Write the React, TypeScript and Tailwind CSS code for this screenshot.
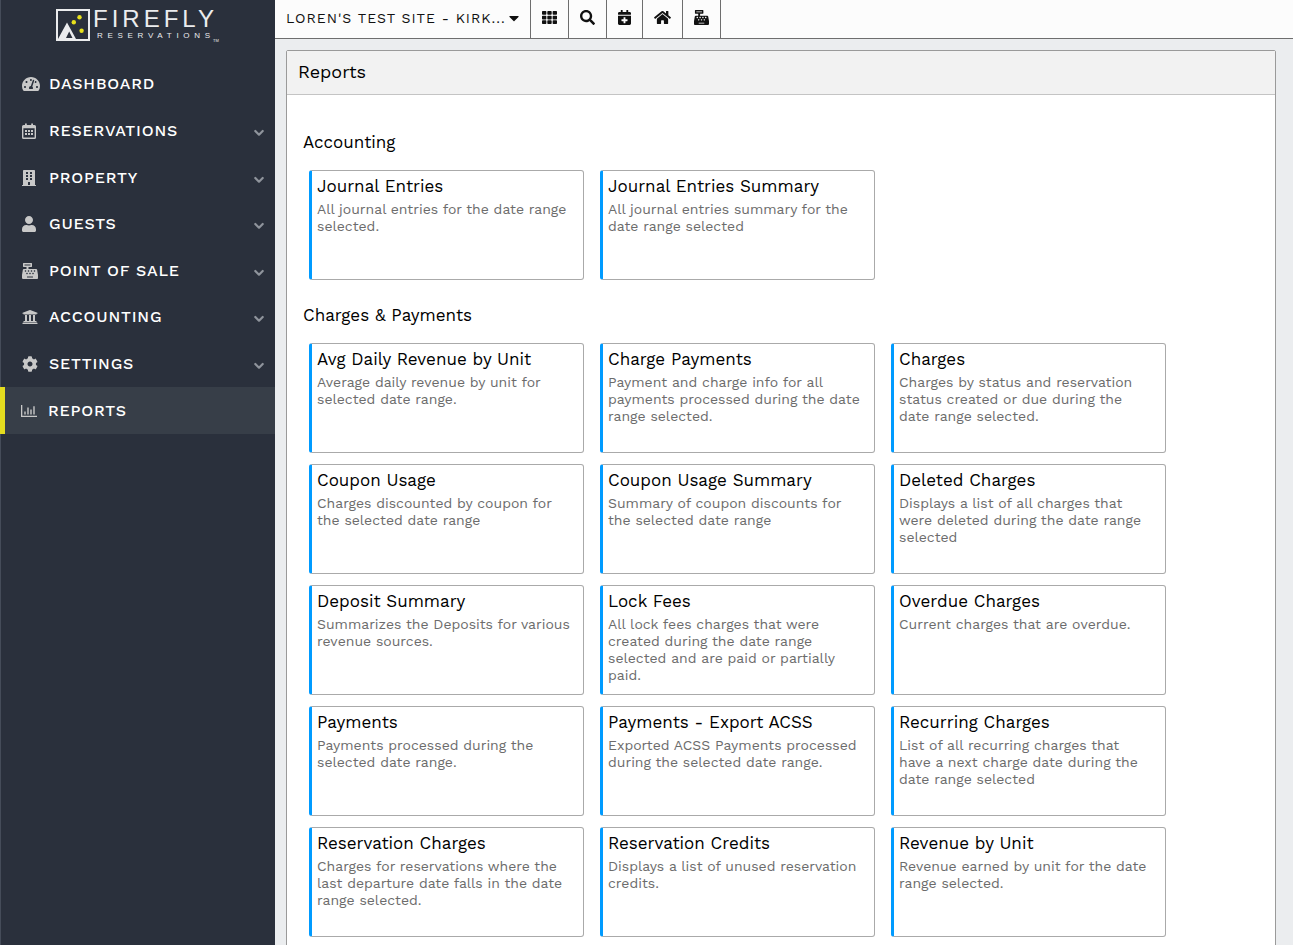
import React, { useState } from "react";
import {
  FaBuilding,
  FaCalendarPlus,
  FaCaretDown,
  FaCashRegister,
  FaCog,
  FaHome,
  FaSearch,
  FaTachometerAlt,
  FaTh,
  FaUniversity,
  FaUser,
} from "react-icons/fa";

type Report = { title: string; text: string };
type Section = { name: string; reports: Report[] };
type IconProps = { className?: string };

const CalendarIcon = ({ className }: IconProps) => (
  <svg className={className} viewBox="0 0 14 16" fill="currentColor">
    <path
      fillRule="evenodd"
      d="M3 .4h1.8V2h4.4V.4H11V2h1.5A1.5 1.5 0 0 1 14 3.5v11a1.5 1.5 0 0 1-1.5 1.5h-11A1.5 1.5 0 0 1 0 14.5v-11A1.5 1.5 0 0 1 1.5 2H3zM1.4 5.2v9.200h11.200V5.200z"
    />
    <path d="M3 7h2v2H3zM6 7h2v2H6zM9 7h2v2H9zM3 10h2v2H3zM6 10h2v2H6zM9 10h2v2H9z" />
  </svg>
);

const ChartIcon = ({ className }: IconProps) => (
  <svg className={className} viewBox="0 0 16 16" fill="currentColor">
    <path d="M0 2h1.3v10.7H16V14H0z" />
    <path d="M3.3 8.5h1.4v3H3.300zM6.300 4.500h1.400v7H6.300zM9.300 6.500h1.400v5H9.300zM12.300 3.300h1.400v8.200h-1.400z" />
  </svg>
);

const ChevronIcon = ({ className }: IconProps) => (
  <svg className={className} viewBox="0 0 10 8" fill="none" stroke="currentColor">
    <path d="M1.3 2 5 5.7 8.7 2" strokeWidth="2.2" strokeLinecap="round" strokeLinejoin="round" />
  </svg>
);

const menu = [
  { label: "DASHBOARD", icon: FaTachometerAlt, size: "h-4 w-[18px]" },
  { label: "RESERVATIONS", icon: CalendarIcon, size: "h-4 w-[14px]", sub: true },
  { label: "PROPERTY", icon: FaBuilding, size: "h-4 w-[14px]", sub: true },
  { label: "GUESTS", icon: FaUser, size: "h-4 w-[14px]", sub: true },
  { label: "POINT OF SALE", icon: FaCashRegister, size: "size-4", sub: true },
  { label: "ACCOUNTING", icon: FaUniversity, size: "size-4", sub: true },
  { label: "SETTINGS", icon: FaCog, size: "size-4", sub: true },
  { label: "REPORTS", icon: ChartIcon, size: "size-4" },
];

const tools = [
  { label: "Grid", icon: FaTh, size: "size-[15px]" },
  { label: "Search", icon: FaSearch, size: "size-[15px]" },
  { label: "New reservation", icon: FaCalendarPlus, size: "h-[15px] w-[13px]" },
  { label: "Home", icon: FaHome, size: "h-[15px] w-[17px]" },
  { label: "Register", icon: FaCashRegister, size: "size-[15px]" },
];

const sections: Section[] = [
  {
    name: "Accounting",
    reports: [
      { title: "Journal Entries", text: "All journal entries for the date range selected." },
      { title: "Journal Entries Summary", text: "All journal entries summary for the date range selected" },
    ],
  },
  {
    name: "Charges & Payments",
    reports: [
      { title: "Avg Daily Revenue by Unit", text: "Average daily revenue by unit for selected date range." },
      { title: "Charge Payments", text: "Payment and charge info for all payments processed during the date range selected." },
      { title: "Charges", text: "Charges by status and reservation status created or due during the date range selected." },
      { title: "Coupon Usage", text: "Charges discounted by coupon for the selected date range" },
      { title: "Coupon Usage Summary", text: "Summary of coupon discounts for the selected date range" },
      { title: "Deleted Charges", text: "Displays a list of all charges that were deleted during the date range selected" },
      { title: "Deposit Summary", text: "Summarizes the Deposits for various revenue sources." },
      { title: "Lock Fees", text: "All lock fees charges that were created during the date range selected and are paid or partially paid." },
      { title: "Overdue Charges", text: "Current charges that are overdue." },
      { title: "Payments", text: "Payments processed during the selected date range." },
      { title: "Payments - Export ACSS", text: "Exported ACSS Payments processed during the selected date range." },
      { title: "Recurring Charges", text: "List of all recurring charges that have a next charge date during the date range selected" },
      { title: "Reservation Charges", text: "Charges for reservations where the last departure date falls in the date range selected." },
      { title: "Reservation Credits", text: "Displays a list of unused reservation credits." },
      { title: "Revenue by Unit", text: "Revenue earned by unit for the date range selected." },
    ],
  },
];

const Logo = () => (
  <svg className="h-[40px] w-[166px]" viewBox="0 0 166 40" fill="#ebecee">
    <rect x="2" y="6" width="32" height="30" fill="none" stroke="#ebecee" strokeWidth="2" />
    <path fillRule="evenodd" d="M3 35 12 18.5 21 35zM11 34h6.5l-3.300-6.500z" />
    <circle cx="24.5" cy="13.3" r="2.2" fill="#e8e11c" />
    <circle cx="18.8" cy="18.3" r="2.2" fill="#e8e11c" />
    <circle cx="26.6" cy="26.7" r="2.2" fill="#e8e11c" />
    <g fontFamily="'Liberation Sans', Arial, sans-serif">
      <text x="38" y="23" fontSize="24" letterSpacing="4">
        FIREFLY
      </text>
      <text x="42" y="34" fontSize="8" letterSpacing="4.7">
        RESERVATIONS
      </text>
      <text x="158" y="38" fontSize="4">
        TM
      </text>
    </g>
  </svg>
);

const SideBar = () => {
  const [active, setActive] = useState("REPORTS");

  return (
    <aside className="w-[275px] shrink-0 border-l border-[#454c59] bg-[#2a303c]">
      <a href="#" aria-label="Firefly Reservations" className="flex h-[61px] items-start pt-1 pl-[54px]">
        <Logo />
      </a>
      <nav className="-ml-px grid h-[373px] grid-rows-8">
        {menu.map(({ label, icon: Icon, size, sub }) => (
          <a
            key={label}
            href="#"
            onClick={() => setActive(label)}
            className={
              active === label
                ? "flex items-center border-l-5 border-[#e4dc1f] bg-[#373e48] pr-[11px] pl-4 text-white"
                : "flex items-center pr-[11px] pl-[22px] text-white"
            }
          >
            <span className="w-[27px] shrink-0 text-[#c8c8c8]">
              <Icon className={size} />
            </span>
            <span className="flex-1 text-[16px] font-medium tracking-wider">{label}</span>
            {sub && <ChevronIcon className="mt-1 h-2 w-[10px] text-[#8f949c]" />}
          </a>
        ))}
      </nav>
    </aside>
  );
};

const TopBar = () => (
  <header className="flex h-[39px] border-b border-[#6e6e6e] bg-[#fcfcfc] text-[#111]">
    <div className="relative w-[256px] border-r border-[#6e6e6e]">
      <select
        aria-label="Site"
        className="h-full w-full appearance-none bg-transparent pr-6 pb-[2px] pl-[11px] text-[14px] tracking-[1px] outline-none"
      >
        <option>LOREN'S TEST SITE - KIRK...</option>
      </select>
      <FaCaretDown className="pointer-events-none absolute top-[10px] right-2 size-4" />
    </div>
    {tools.map(({ label, icon: Icon, size }) => (
      <button
        key={label}
        type="button"
        aria-label={label}
        className="flex items-center border-r border-[#6e6e6e] px-[11px] pb-[3px]"
      >
        <Icon className={size} />
      </button>
    ))}
  </header>
);

const ReportCard = ({ title, text }: Report) => (
  <a
    href="#"
    className="h-[110px] rounded-[3px] border border-l-3 border-[#aaa] border-l-[#009bff] bg-white pt-1 pr-[10px] pl-[5px]"
  >
    <h3 className="text-[17px] leading-[22px] text-black">{title}</h3>
    <p className="mt-1 text-[14px] leading-[17px] text-[#6c6c6c]">{text}</p>
  </a>
);

const App = () => {
  return (
    <div className="flex h-screen overflow-hidden bg-[#ebedef] font-['Work_Sans',Inter,sans-serif]">
      <SideBar />
      <div className="flex min-w-0 flex-1 flex-col">
        <TopBar />
        <main className="min-h-0 flex-1 overflow-hidden pt-[11px] pr-[17px] pl-[11px]">
          <div className="rounded-t-[2px] border border-[#9a9a9a] bg-white">
            <h1 className="flex h-11 items-center border-b border-[#c4c4c4] bg-[#f2f2f2] pb-[2px] pl-[11px] text-[18px] text-black">
              Reports
            </h1>
            <div className="flex flex-col gap-[23px] px-4 pt-[35px] pb-6">
              {sections.map((section) => (
                <section key={section.name}>
                  <h2 className="mb-4 text-[17px] leading-6 text-black">{section.name}</h2>
                  <div className="grid grid-cols-[repeat(auto-fill,275px)] gap-x-4 gap-y-[11px] pl-[6px]">
                    {section.reports.map((report) => (
                      <ReportCard key={report.title} {...report} />
                    ))}
                  </div>
                </section>
              ))}
            </div>
          </div>
        </main>
      </div>
    </div>
  );
};

export default App;
